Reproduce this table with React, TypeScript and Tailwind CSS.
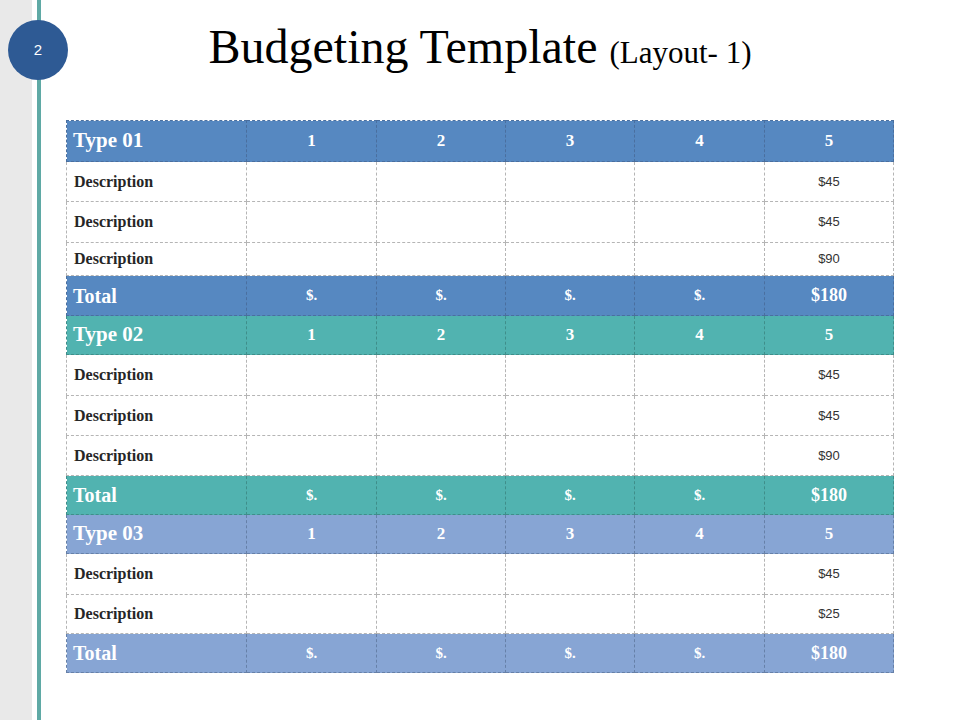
import React from "react";

type Section = {
  name: string;
  head: string;
  border: string;
  rows: { label: string; value: string; h: string }[];
  headH: string;
  totalH: string;
};

const sections: Section[] = [
  {
    name: "Type 01",
    head: "bg-[#5688c1]",
    border: "border-[#4a6f9f]",
    headH: "h-[41px]",
    totalH: "h-[40px]",
    rows: [
      { label: "Description", value: "$45", h: "h-[40px]" },
      { label: "Description", value: "$45", h: "h-[41px]" },
      { label: "Description", value: "$90", h: "h-[33px]" },
    ],
  },
  {
    name: "Type 02",
    head: "bg-[#51b3b0]",
    border: "border-[#3f8e8a]",
    headH: "h-[39px]",
    totalH: "h-[39px]",
    rows: [
      { label: "Description", value: "$45", h: "h-[41px]" },
      { label: "Description", value: "$45", h: "h-[40px]" },
      { label: "Description", value: "$90", h: "h-[40px]" },
    ],
  },
  {
    name: "Type 03",
    head: "bg-[#87a5d4]",
    border: "border-[#6680a8]",
    headH: "h-[39px]",
    totalH: "h-[39px]",
    rows: [
      { label: "Description", value: "$45", h: "h-[41px]" },
      { label: "Description", value: "$25", h: "h-[39px]" },
    ],
  },
];

const serif = "font-['Liberation_Serif','Times_New_Roman',serif]";

function SectionRows({ s }: { s: Section }) {
  const cols = ["1", "2", "3", "4", "5"];
  const dark = `border border-dashed ${s.border}`;
  const light = "border border-dashed border-[#b5b5b5]";
  return (
    <>
      <tr className={`${s.head} ${s.headH} text-white`}>
        <td className={`${dark} pl-[6px] text-[21px] font-bold`}>{s.name}</td>
        {cols.map((c) => (
          <td key={c} className={`${dark} text-center text-[17px] font-bold`}>
            {c}
          </td>
        ))}
      </tr>
      {s.rows.map((r, i) => (
        <tr key={i} className={`${r.h} bg-white`}>
          <td className={`${light} pl-[7px] text-[16px] font-bold text-[#262626]`}>{r.label}</td>
          <td className={light}></td>
          <td className={light}></td>
          <td className={light}></td>
          <td className={light}></td>
          <td className={`${light} text-center font-['Liberation_Sans',Arial,sans-serif] text-[13px] text-[#333]`}>
            {r.value}
          </td>
        </tr>
      ))}
      <tr className={`${s.head} ${s.totalH} text-white`}>
        <td className={`${dark} pl-[6px] text-[20px] font-bold`}>Total</td>
        {["$.", "$.", "$.", "$."].map((v, i) => (
          <td key={i} className={`${dark} text-center text-[15px] font-bold`}>
            {v}
          </td>
        ))}
        <td className={`${dark} text-center text-[18px] font-bold`}>$180</td>
      </tr>
    </>
  );
}

export default function App() {
  return (
    <div className={`relative flex h-[720px] w-[960px] overflow-hidden bg-white ${serif}`}>
      <div className="w-[32px] shrink-0 bg-[#e9e9e9]" />
      <div className="w-[5px] shrink-0 bg-white" />
      <div className="w-[4px] shrink-0 bg-[#5fa9a5]" />

      <div className="flex flex-1 flex-col">
        <div className="flex h-[120px] items-start justify-center pr-[41px] pt-[21px]">
          <h1 className="text-[48px] leading-[52px] text-black">
            Budgeting Template <span className="text-[31px]">(Layout- 1)</span>
          </h1>
        </div>

        <div className="pl-[25px]">
          <table className="w-[827px] table-fixed border-collapse">
            <colgroup>
              <col className="w-[180px]" />
              <col className="w-[130px]" />
              <col className="w-[129px]" />
              <col className="w-[129px]" />
              <col className="w-[130px]" />
              <col className="w-[129px]" />
            </colgroup>
            <tbody>
              {sections.map((s) => (
                <SectionRows key={s.name} s={s} />
              ))}
            </tbody>
          </table>
        </div>
      </div>

      <div className="absolute left-[8px] top-[20px] flex h-[60px] w-[60px] items-center justify-center rounded-full bg-[#2e5a94] font-['Liberation_Sans',Arial,sans-serif] text-[15px] text-white">
        2
      </div>
    </div>
  );
}
